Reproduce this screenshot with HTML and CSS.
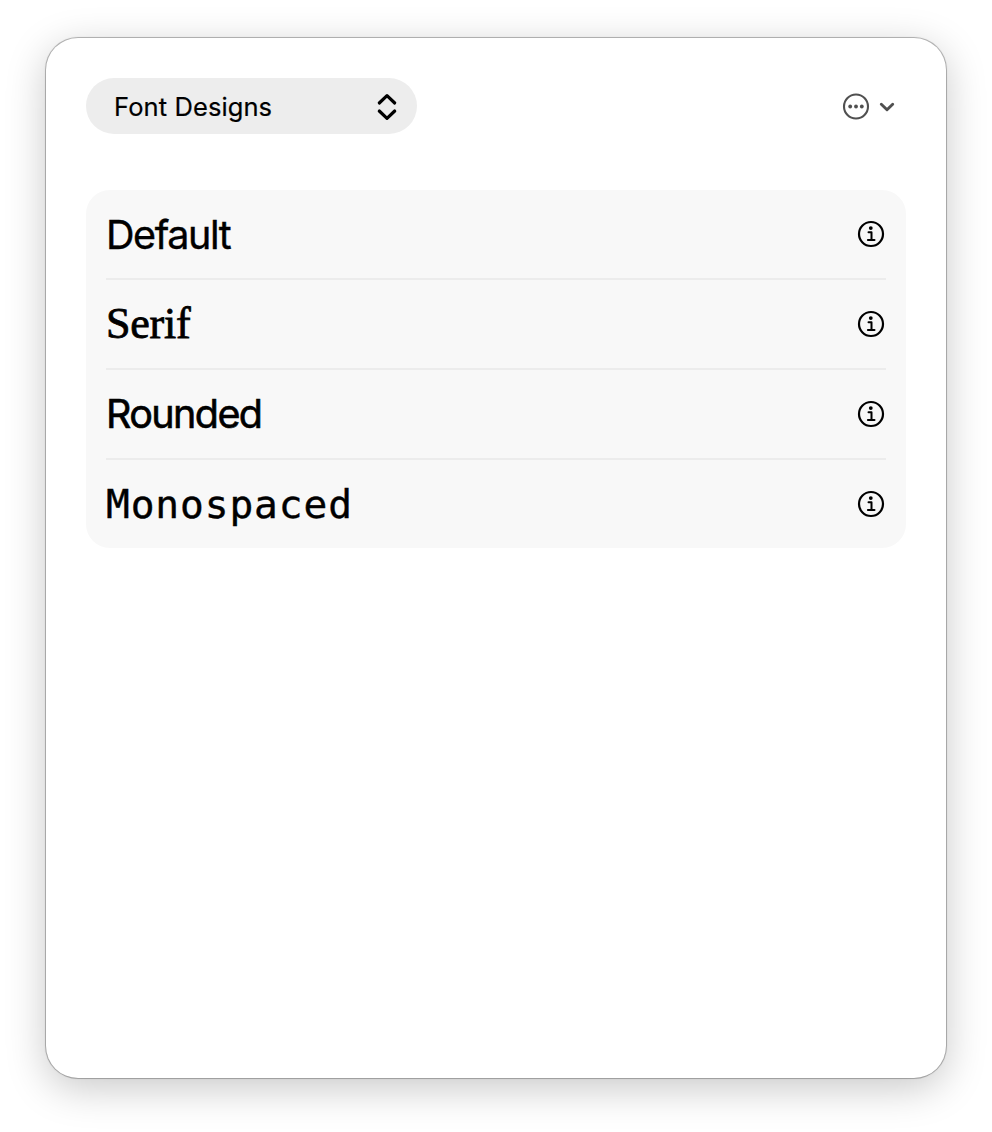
FILE: index.html
```html
<!DOCTYPE html>
<html lang="en">
<head>
<meta charset="utf-8">
<title>Font Designs</title>
<link rel="stylesheet" href="styles.css">
</head>
<body>
<svg width="0" height="0" class="symbols" aria-hidden="true">
  <symbol id="info" viewBox="0 0 28 28">
    <circle cx="14" cy="14" r="12" fill="none" stroke="currentColor" stroke-width="2.2"/>
    <circle cx="13.8" cy="8.1" r="1.9" fill="currentColor"/>
    <path d="M11.5 12.2h3v7.6M10.9 20h6.6" fill="none" stroke="currentColor" stroke-width="2" stroke-linecap="round" stroke-linejoin="round"/>
  </symbol>
</svg>
<main class="window">
  <header class="toolbar">
    <button class="picker">
      <span class="picker-label">Font Designs</span>
      <svg class="picker-icon" width="22" height="28" viewBox="0 0 22 28"><path d="M3.3 10 11 2.6 18.7 10M3.3 18 11 25.4 18.7 18" fill="none" stroke="currentColor" stroke-width="3.2" stroke-linecap="round" stroke-linejoin="round"/></svg>
    </button>
    <button class="more" aria-label="More">
      <svg width="28" height="28" viewBox="0 0 28 28"><circle cx="14" cy="13.5" r="12" fill="none" stroke="currentColor" stroke-width="2.1"/><g fill="currentColor"><circle cx="8.2" cy="13.5" r="1.9"/><circle cx="14" cy="13.5" r="1.9"/><circle cx="19.8" cy="13.5" r="1.9"/></g></svg>
      <svg width="16" height="12" viewBox="0 0 16 12"><path d="M2.3 3.2 8 8.8 13.7 3.2" fill="none" stroke="currentColor" stroke-width="2.9" stroke-linecap="round" stroke-linejoin="round"/></svg>
    </button>
  </header>
  <ul class="list">
    <li class="row"><span class="default">Default</span><svg class="info"><use href="#info"/></svg></li>
    <li class="row"><span class="serif">Serif</span><svg class="info"><use href="#info"/></svg></li>
    <li class="row"><span class="rounded">Rounded</span><svg class="info"><use href="#info"/></svg></li>
    <li class="row"><span class="mono">Monospaced</span><svg class="info"><use href="#info"/></svg></li>
  </ul>
</main>
</body>
</html>
```
FILE: styles.css
```css
* { box-sizing: border-box; }
body {
  margin: 0;
  height: 1132px;
  padding: 38px 46px 54px;
  background: #fff;
  color: #000;
  font-family: Inter, "Liberation Sans", sans-serif;
  overflow: hidden;
}
.symbols { position: absolute; }
.window {
  height: 1040px;
  padding: 40px;
  border-radius: 32px;
  background: #fff;
  box-shadow: 0 0 0 1px rgba(0,0,0,.2), 0 0 2px rgba(0,0,0,.3), 0 10px 40px rgba(0,0,0,.22);
}
.toolbar { display: flex; justify-content: space-between; height: 56px; }
button { border: 0; background: none; color: inherit; font: inherit; }
.picker {
  display: flex;
  align-items: center;
  justify-content: space-between;
  width: 331px;
  padding: 0 19px 0 28px;
  border-radius: 28px;
  background: #ededed;
}
.picker-label { font-size: 25.5px; line-height: 56px; letter-spacing: .1px; padding-top: 1px; -webkit-text-stroke: .2px; }
.picker-icon { margin-top: 2px; }
.more { display: flex; align-items: center; gap: 9px; padding: 1px 11px 0 0; color: #505050; }
.list {
  margin: 56px 0 0;
  padding: 0 20px;
  border-radius: 24px;
  background: #f8f8f8;
  list-style: none;
}
.row { display: flex; align-items: center; justify-content: space-between; height: 90px; border-bottom: 2px solid #ececec; font-size: 39.5px; line-height: 88px; }
.row:last-child { height: 88px; border-bottom: 0; }
.info { width: 28px; height: 28px; margin-right: 1px; }
.default { letter-spacing: -1.4px; -webkit-text-stroke: .4px; padding-top: 1px; }
.serif { font-family: "Liberation Serif", serif; font-size: 44px; letter-spacing: -.2px; -webkit-text-stroke: .8px; }
.rounded { letter-spacing: -1.6px; -webkit-text-stroke: .6px; }
.mono { font-family: "DejaVu Sans Mono", monospace; font-size: 39.5px; letter-spacing: .9px; -webkit-text-stroke: .4px; }
```
